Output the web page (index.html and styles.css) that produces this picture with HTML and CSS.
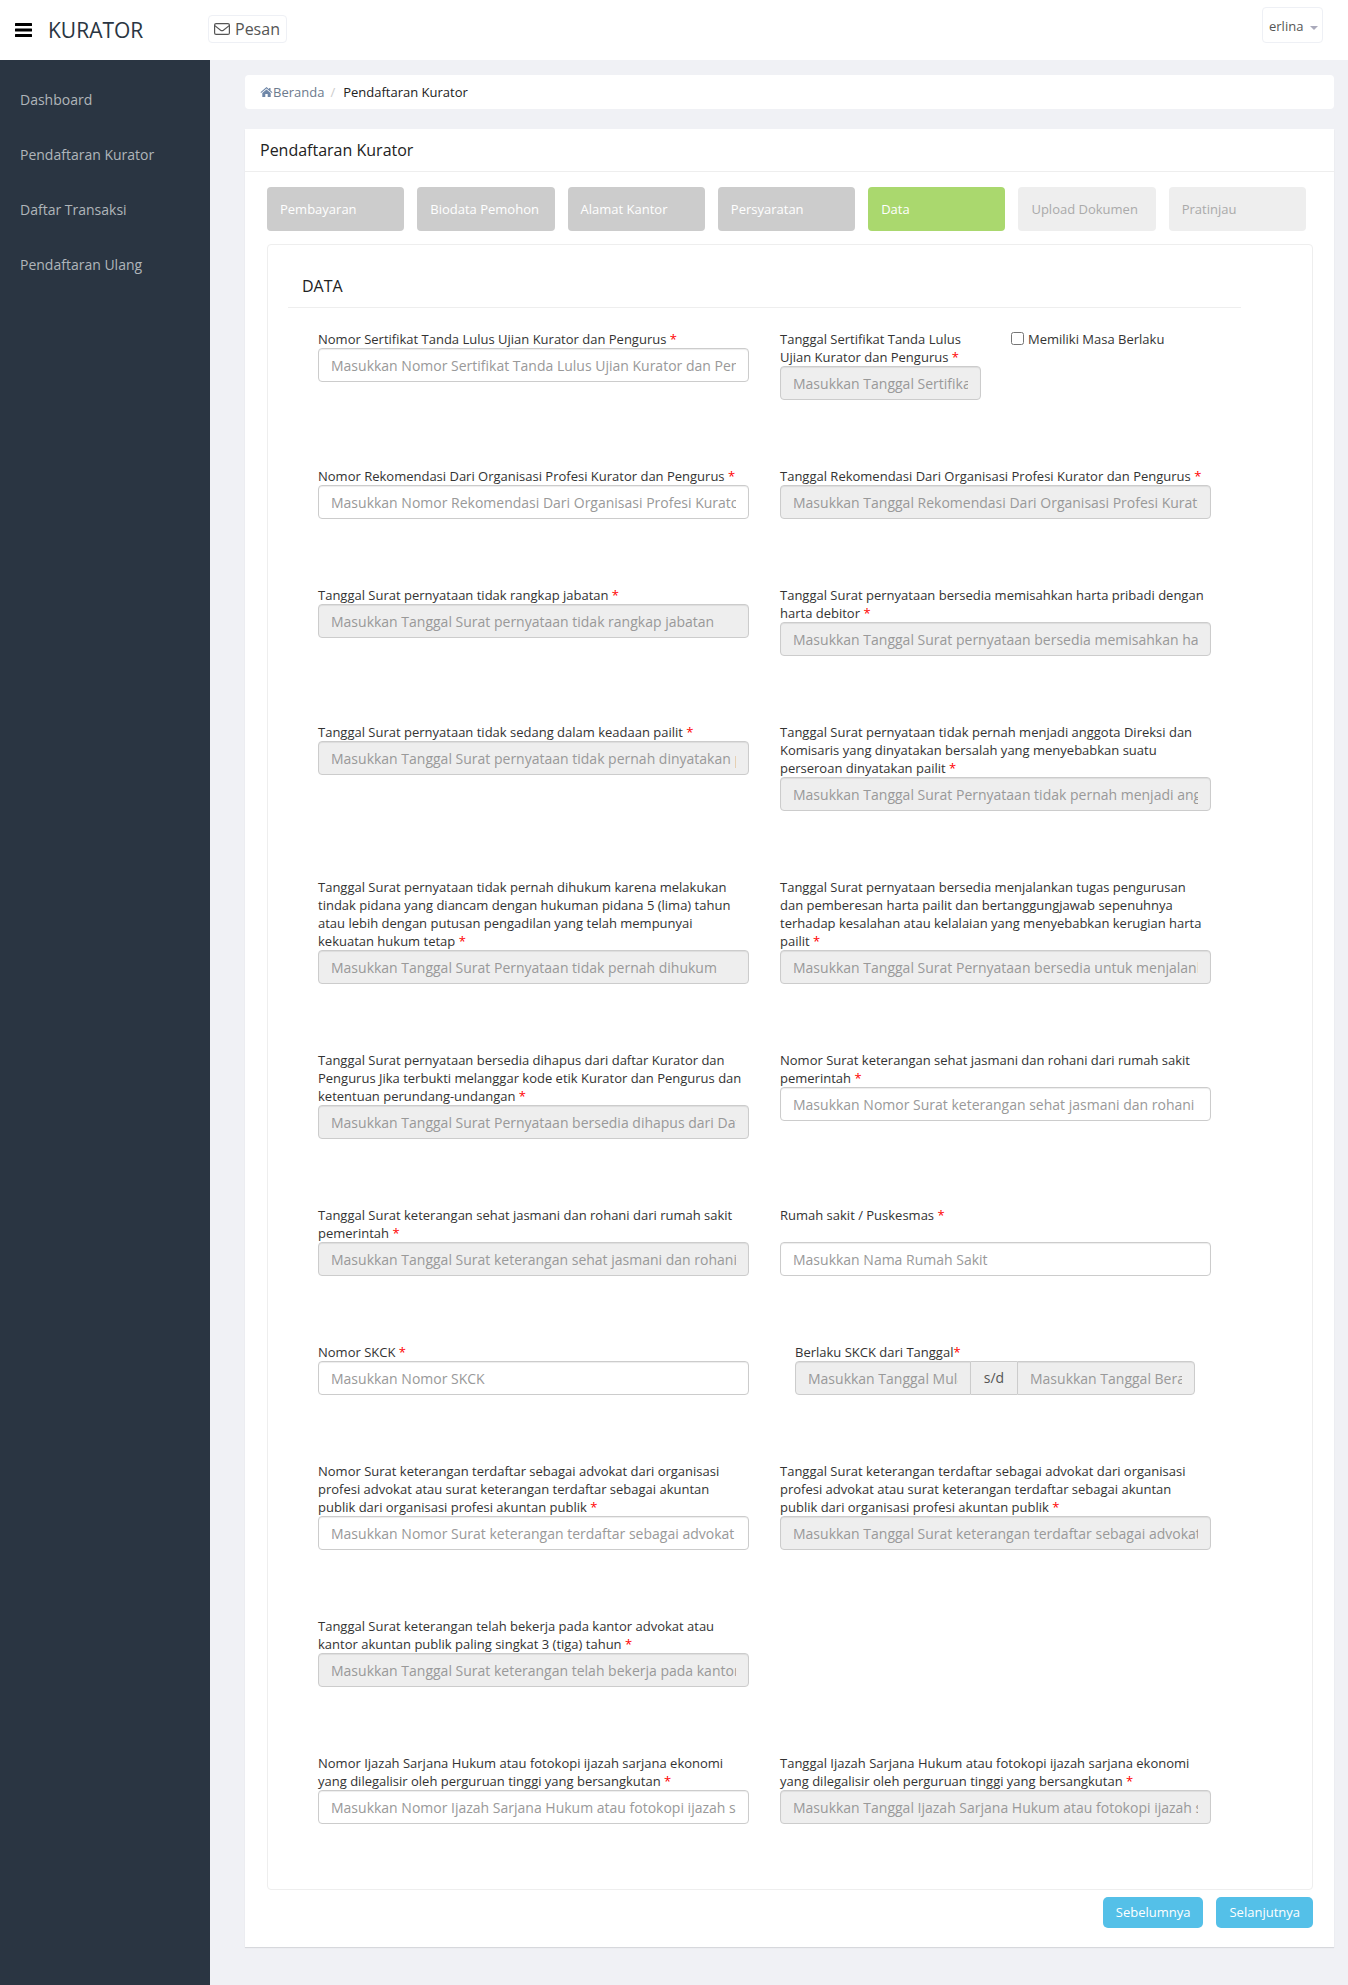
FILE: index.html
```html
<!DOCTYPE html>
<html lang="id">
<head>
  <meta charset="UTF-8" />
  <title>Pendaftaran Kurator</title>
  <link rel="stylesheet" href="styles.css">
</head>
<body>
  <header class="topbar">
    <svg class="bars" width="17" height="14" viewBox="0 0 17 14"><rect width="17" height="3" rx="0.5"/><rect y="5.5" width="17" height="3" rx="0.5"/><rect y="11" width="17" height="3" rx="0.5"/></svg>
    <div class="brand">KURATOR</div>
    <a class="pesan">
      <svg width="16" height="12" viewBox="0 0 16 12" fill="none" stroke="#555" stroke-width="1.2"><rect x="0.6" y="0.6" width="14.8" height="10.8" rx="1.5"/><path d="M0.8 2.6 L6.6 7.2 Q8 8.2 9.4 7.2 L15.2 2.6"/></svg>
      Pesan
    </a>
    <a class="user">erlina <span class="caret"></span></a>
  </header>

  <div class="wrap">
    <nav class="sidebar">
      <a>Dashboard</a>
      <a>Pendaftaran Kurator</a>
      <a>Daftar Transaksi</a>
      <a>Pendaftaran Ulang</a>
    </nav>

    <main class="content">
      <div class="breadcrumb">
        <svg width="13" height="10" viewBox="0 0 12 10" fill="#6f87a8"><path d="M6 0 L8.6 2.3 V1 H10 V3.5 L12 5.3 L11.4 6 L6 1.4 L0.6 6 L0 5.3 Z M1.8 6 L6 2.5 L10.2 6 V10 H7.2 V7 H4.8 V10 H1.8 Z"/></svg><span class="crumb-link">Beranda</span>
        <span class="crumb-sep">/</span>
        <span class="crumb-now">Pendaftaran Kurator</span>
      </div>

      <section class="card">
        <h2 class="card-title">Pendaftaran Kurator</h2>
        <div class="card-body">
          <div class="steps">
            <div class="step done">Pembayaran</div>
            <div class="step done">Biodata Pemohon</div>
            <div class="step done">Alamat Kantor</div>
            <div class="step done">Persyaratan</div>
            <div class="step active">Data</div>
            <div class="step todo">Upload Dokumen</div>
            <div class="step todo">Pratinjau</div>
          </div>

          <div class="box">
            <h3 class="box-title">DATA</h3>
            <form class="fields">
              <div class="field">
                <label>Nomor Sertifikat Tanda Lulus Ujian Kurator dan Pengurus <i>*</i></label>
                <input type="text" placeholder="Masukkan Nomor Sertifikat Tanda Lulus Ujian Kurator dan Pengurus">
              </div>
              <div class="field-split">
                <div class="field short">
                  <label>Tanggal Sertifikat Tanda Lulus Ujian Kurator dan Pengurus <i>*</i></label>
                  <input type="text" readonly placeholder="Masukkan Tanggal Sertifikat">
                </div>
                <label class="check"><input type="checkbox"> Memiliki Masa Berlaku</label>
              </div>

              <div class="field">
                <label>Nomor Rekomendasi Dari Organisasi Profesi Kurator dan Pengurus <i>*</i></label>
                <input type="text" placeholder="Masukkan Nomor Rekomendasi Dari Organisasi Profesi Kurator dan Pengurus">
              </div>
              <div class="field">
                <label>Tanggal Rekomendasi Dari Organisasi Profesi Kurator dan Pengurus <i>*</i></label>
                <input type="text" readonly placeholder="Masukkan Tanggal Rekomendasi Dari Organisasi Profesi Kurator dan Pengurus">
              </div>

              <div class="field">
                <label>Tanggal Surat pernyataan tidak rangkap jabatan <i>*</i></label>
                <input type="text" readonly placeholder="Masukkan Tanggal Surat pernyataan tidak rangkap jabatan">
              </div>
              <div class="field">
                <label>Tanggal Surat pernyataan bersedia memisahkan harta pribadi dengan harta debitor <i>*</i></label>
                <input type="text" readonly placeholder="Masukkan Tanggal Surat pernyataan bersedia memisahkan harta pribadi">
              </div>

              <div class="field">
                <label>Tanggal Surat pernyataan tidak sedang dalam keadaan pailit <i>*</i></label>
                <input type="text" readonly placeholder="Masukkan Tanggal Surat pernyataan tidak pernah dinyatakan pailit">
              </div>
              <div class="field">
                <label>Tanggal Surat pernyataan tidak pernah menjadi anggota Direksi dan Komisaris yang dinyatakan bersalah yang menyebabkan suatu perseroan dinyatakan pailit <i>*</i></label>
                <input type="text" readonly placeholder="Masukkan Tanggal Surat Pernyataan tidak pernah menjadi anggota Direksi">
              </div>

              <div class="field">
                <label>Tanggal Surat pernyataan tidak pernah dihukum karena melakukan tindak pidana yang diancam dengan hukuman pidana 5 (lima) tahun atau lebih dengan putusan pengadilan yang telah mempunyai kekuatan hukum tetap <i>*</i></label>
                <input type="text" readonly placeholder="Masukkan Tanggal Surat Pernyataan tidak pernah dihukum">
              </div>
              <div class="field">
                <label>Tanggal Surat pernyataan bersedia menjalankan tugas pengurusan dan pemberesan harta pailit dan bertanggungjawab sepenuhnya terhadap kesalahan atau kelalaian yang menyebabkan kerugian harta pailit <i>*</i></label>
                <input type="text" readonly placeholder="Masukkan Tanggal Surat Pernyataan bersedia untuk menjalankan tugas">
              </div>

              <div class="field">
                <label>Tanggal Surat pernyataan bersedia dihapus dari daftar Kurator dan Pengurus Jika terbukti melanggar kode etik Kurator dan Pengurus dan ketentuan perundang-undangan <i>*</i></label>
                <input type="text" readonly placeholder="Masukkan Tanggal Surat Pernyataan bersedia dihapus dari Daftar Kurator">
              </div>
              <div class="field">
                <label>Nomor Surat keterangan sehat jasmani dan rohani dari rumah sakit pemerintah <i>*</i></label>
                <input type="text" placeholder="Masukkan Nomor Surat keterangan sehat jasmani dan rohani dari rumah sakit">
              </div>

              <div class="field">
                <label>Tanggal Surat keterangan sehat jasmani dan rohani dari rumah sakit pemerintah <i>*</i></label>
                <input type="text" readonly placeholder="Masukkan Tanggal Surat keterangan sehat jasmani dan rohani dari rumah sakit">
              </div>
              <div class="field">
                <label class="tall">Rumah sakit / Puskesmas <i>*</i></label>
                <input type="text" placeholder="Masukkan Nama Rumah Sakit">
              </div>

              <div class="field">
                <label>Nomor SKCK <i>*</i></label>
                <input type="text" placeholder="Masukkan Nomor SKCK">
              </div>
              <div class="field range">
                <label>Berlaku SKCK dari Tanggal<i>*</i></label>
                <div class="input-group">
                  <input type="text" readonly placeholder="Masukkan Tanggal Mulai Berlaku">
                  <span class="addon">s/d</span>
                  <input type="text" readonly placeholder="Masukkan Tanggal Berakhir">
                </div>
              </div>

              <div class="field">
                <label>Nomor Surat keterangan terdaftar sebagai advokat dari organisasi profesi advokat atau surat keterangan terdaftar sebagai akuntan publik dari organisasi profesi akuntan publik <i>*</i></label>
                <input type="text" placeholder="Masukkan Nomor Surat keterangan terdaftar sebagai advokat dari organisasi">
              </div>
              <div class="field">
                <label>Tanggal Surat keterangan terdaftar sebagai advokat dari organisasi profesi advokat atau surat keterangan terdaftar sebagai akuntan publik dari organisasi profesi akuntan publik <i>*</i></label>
                <input type="text" readonly placeholder="Masukkan Tanggal Surat keterangan terdaftar sebagai advokat dari organisasi">
              </div>

              <div class="field">
                <label>Tanggal Surat keterangan telah bekerja pada kantor advokat atau kantor akuntan publik paling singkat 3 (tiga) tahun <i>*</i></label>
                <input type="text" readonly placeholder="Masukkan Tanggal Surat keterangan telah bekerja pada kantor advokat">
              </div>
              <div></div>

              <div class="field">
                <label>Nomor Ijazah Sarjana Hukum atau fotokopi ijazah sarjana ekonomi yang dilegalisir oleh perguruan tinggi yang bersangkutan <i>*</i></label>
                <input type="text" placeholder="Masukkan Nomor Ijazah Sarjana Hukum atau fotokopi ijazah sarjana ekonomi">
              </div>
              <div class="field">
                <label>Tanggal Ijazah Sarjana Hukum atau fotokopi ijazah sarjana ekonomi yang dilegalisir oleh perguruan tinggi yang bersangkutan <i>*</i></label>
                <input type="text" readonly placeholder="Masukkan Tanggal Ijazah Sarjana Hukum atau fotokopi ijazah sarjana ekonomi">
              </div>
            </form>
          </div>

          <div class="actions">
            <a class="btn">Sebelumnya</a>
            <a class="btn">Selanjutnya</a>
          </div>
        </div>
      </section>
    </main>
  </div>
</body>
</html>
```

FILE: styles.css
```css
* {
  box-sizing: border-box;
}

body {
  margin: 0;
  min-height: 100vh;
  font-family: "Open Sans", sans-serif;
  font-size: 13px;
  color: #333;
  background: #f0f1f5;
}

.topbar {
  height: 60px;
  background: #fff;
  position: relative;
  display: flex;
  align-items: flex-start;
}

.bars {
  fill: #000;
  margin: 23px 0 0 15px;
  flex: none;
}

.brand {
  font-size: 21px;
  line-height: 28px;
  margin: 16px 0 0 16px;
  width: 160px;
  color: #2a3542;
}

.pesan {
  display: flex;
  align-items: center;
  gap: 5px;
  width: 79px;
  height: 28px;
  margin-top: 15px;
  padding: 0 5px;
  border: 1px solid #eef0f5;
  border-radius: 4px;
  font-size: 16px;
  color: #555;
}

.user {
  margin: 7px 25px 0 auto;
  width: 61px;
  height: 36px;
  padding: 9px 0 0 6px;
  border: 1px solid #eef0f5;
  border-radius: 4px;
  color: #555;
}

.caret {
  display: inline-block;
  margin-left: 3px;
  vertical-align: middle;
  border-top: 4px solid #aab;
  border-left: 4px solid transparent;
  border-right: 4px solid transparent;
}

.wrap {
  display: flex;
  min-height: 1925px;
}

.sidebar {
  width: 210px;
  flex: none;
  background: #2a3542;
  padding-top: 12px;
}

.sidebar a {
  display: block;
  height: 55px;
  line-height: 55px;
  padding-left: 20px;
  font-size: 14px;
  color: #b0b5ba;
}

.content {
  flex: 1;
  padding: 15px 14px 38px 35px;
}

.breadcrumb {
  height: 34px;
  background: #fff;
  border-radius: 4px;
  margin-bottom: 20px;
  padding-left: 15px;
  display: flex;
  align-items: center;
}

.crumb-link {
  color: #6c7a8d;
}

.crumb-sep {
  color: #ccc;
  margin: 0 8px 0 6px;
}

.crumb-now {
  color: #222;
}

.card {
  background: #fff;
  box-shadow: 0 1px 1px rgba(0, 0, 0, 0.1);
  padding-bottom: 19px;
}

.card-title {
  margin: 0;
  height: 43px;
  padding: 0 15px;
  line-height: 42px;
  font-size: 16px;
  font-weight: 400;
  color: #222;
  border-bottom: 1px solid #eee;
}

.card-body {
  padding: 15px 21px 0 22px;
}

.steps {
  display: grid;
  grid-template-columns: repeat(7, 1fr);
  gap: 13px;
  width: 1039px;
}

.step {
  height: 44px;
  line-height: 44px;
  padding-left: 13px;
  border-radius: 4px;
  white-space: nowrap;
}

.step.done {
  background: #ccc;
  color: #fff;
}

.step.active {
  background: #aad86e;
  color: #fff;
}

.step.todo {
  background: #eee;
  color: #aaa;
}

.box {
  margin-top: 13px;
  padding: 0 71px 65px 20px;
  border: 1px solid #eee;
  border-radius: 4px;
}

.box-title {
  margin: 0;
  height: 63px;
  padding: 22px 0 0 14px;
  font-size: 16px;
  line-height: 38px;
  font-weight: 400;
  color: #222;
  border-bottom: 1px solid #eee;
}

.fields {
  display: grid;
  grid-template-columns: 431px 431px;
  column-gap: 31px;
  row-gap: 67px;
  align-items: start;
  margin: 22px 0 0 30px;
}

.field label {
  display: block;
  line-height: 18px;
  color: #333;
}

.field label.tall {
  height: 36px;
}

.field i {
  color: #f00;
  font-style: normal;
}

.field input[type="text"] {
  display: block;
  width: 100%;
  height: 34px;
  padding: 6px 12px;
  font-family: inherit;
  font-size: 14px;
  color: #555;
  background: #fff;
  border: 1px solid #ccc;
  border-radius: 4px;
  box-shadow: inset 0 1px 1px rgba(0, 0, 0, 0.075);
  outline: none;
}

.field input::placeholder {
  color: #999;
}

.field input[readonly] {
  background: #eee;
}

.field-split {
  display: flex;
}

.field.short {
  width: 201px;
}

.check {
  margin: 0 0 0 30px;
  display: flex;
  align-items: flex-start;
  line-height: 18px;
}

.check input {
  width: 13px;
  height: 13px;
  margin: 2px 4px 0 0;
}

.range {
  padding-left: 15px;
  width: 415px;
}

.input-group {
  display: flex;
}

.input-group input[type="text"] {
  flex: 1;
  min-width: 0;
  width: auto;
}

.input-group input:first-child {
  flex: 0 0 176px;
  border-radius: 4px 0 0 4px;
}

.input-group input:last-child {
  border-radius: 0 4px 4px 0;
}

.addon {
  width: 46px;
  flex: none;
  line-height: 32px;
  text-align: center;
  font-size: 14px;
  color: #555;
  background: #eee;
  border-top: 1px solid #ccc;
  border-bottom: 1px solid #ccc;
}

.actions {
  display: flex;
  justify-content: flex-end;
  gap: 13px;
  margin-top: 7px;
}

.btn {
  height: 31px;
  line-height: 31px;
  padding: 0 13px;
  background: #54c0e8;
  color: #fff;
  border-radius: 5px;
}
```
